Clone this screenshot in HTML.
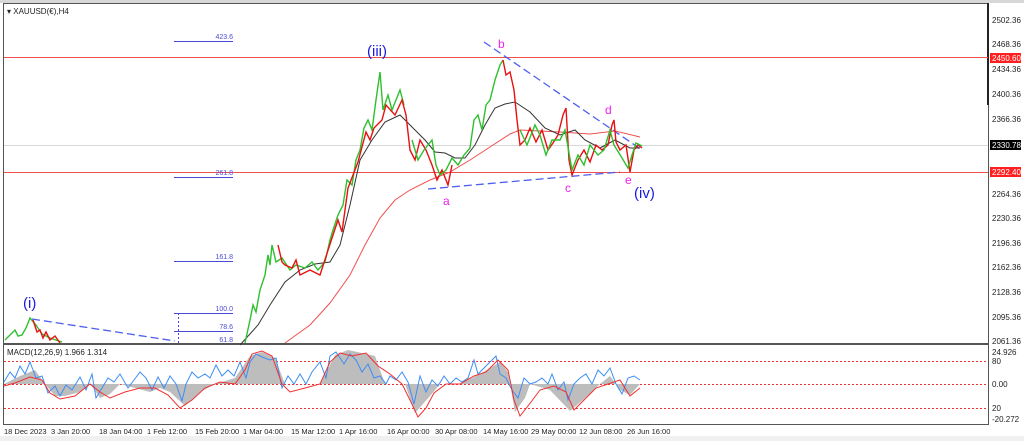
<!DOCTYPE html>
<html><head><meta charset="utf-8"><style>
html,body{margin:0;padding:0;background:#fff;}
svg{display:block;font-family:"Liberation Sans",sans-serif;}
</style></head><body>
<svg width="1024" height="441" viewBox="0 0 1024 441" xmlns="http://www.w3.org/2000/svg">
<rect width="1024" height="441" fill="#fff"/>
<rect x="0" y="0" width="1024" height="3" fill="#d8d8d8"/>
<rect x="0" y="436" width="1024" height="5" fill="#f0f0f0"/>
<rect x="3.5" y="3.5" width="985" height="340" fill="#fff" stroke="#555" stroke-width="1"/>
<rect x="3.5" y="344.5" width="985" height="80" fill="#fff" stroke="#555" stroke-width="1"/>
<line x1="988" y1="3" x2="988" y2="105" stroke="#222" stroke-width="2"/>
<text x="7" y="14" font-size="8" fill="#222">▾ XAUUSD(€),H4</text>
<line x1="4" y1="57.5" x2="988" y2="57.5" stroke="#f05050" stroke-width="1"/>
<line x1="4" y1="172.5" x2="988" y2="172.5" stroke="#f05050" stroke-width="1"/>
<line x1="4" y1="145.5" x2="988" y2="145.5" stroke="#d8d8d8" stroke-width="1"/>
<g stroke="#4a4ad8" stroke-width="1">
<line x1="174" y1="41.5" x2="233" y2="41.5"/>
<line x1="174" y1="177.5" x2="233" y2="177.5"/>
<line x1="174" y1="261.5" x2="233" y2="261.5"/>
<line x1="174" y1="313.5" x2="233" y2="313.5"/>
<line x1="174" y1="331.5" x2="233" y2="331.5"/>
<line x1="178.5" y1="313" x2="178.5" y2="343" stroke-dasharray="2,2"/>
</g>
<g font-size="7" fill="#4a4ad8" text-anchor="end">
<text x="233" y="39">423.6</text><text x="233" y="175">261.8</text><text x="233" y="259">161.8</text>
<text x="233" y="311">100.0</text><text x="233" y="329">78.6</text><text x="233" y="342">61.8</text>
</g>
<g stroke="#4d5ff0" stroke-width="1.3" stroke-dasharray="8,4" fill="none">
<line x1="32" y1="319" x2="175" y2="341"/>
<line x1="484" y1="42" x2="642" y2="150"/>
<line x1="428" y1="189" x2="620" y2="172"/>
</g>
<polyline fill="none" stroke="#f05050" stroke-width="1" points="285,343 310,325 330,303 350,275 365,245 380,218 395,200 410,190 430,180 450,172 470,160 490,147 510,134 520,130 560,132 590,134 615,131 640,137"/>
<polyline fill="none" stroke="#333" stroke-width="1" points="240,345 258,325 270,305 285,282 300,270 315,264 330,262 340,245 350,205 360,160 372,140 385,122 400,115 410,125 425,140 435,152 445,153 455,158 465,158 475,145 485,125 495,108 505,104 515,102 530,112 545,128 560,135 575,130 585,140 600,148 615,140 630,148 640,148"/>
<g fill="none" stroke-width="1.4">
<polyline stroke="#2ec02e" points="5,340 15,330 18,336 22,335 26,328 30,318 36,325 42,334 50,338 62,342"/>
<polyline stroke="#e81010" points="33,320 37,332 40,330 43,338 46,332 50,340 55,336 60,343"/>
<polyline stroke="#2ec02e" points="245,343 250,320 253,305 256,312 260,290 265,275 268,255 270,265 272,245 276,262 282,258 290,270 296,265 305,268 312,262 318,270 325,262 330,240 333,230 338,215 343,205 347,180 352,185 356,160 360,150 364,128 368,120 372,130 376,100 380,72 383,110 388,95 392,110 396,100 400,90 404,105"/>
<polyline stroke="#e81010" points="278,245 282,262 285,265 292,268 296,260 300,275 310,270 320,275 332,238 338,220 342,232 348,188 358,162 366,132 370,140 374,128 382,120 386,105 395,115 402,100 406,115 410,150 415,160 420,140 426,150 432,165 437,180 442,170 448,185 452,165"/>
<polyline stroke="#2ec02e" points="412,140 418,160 424,150 432,140 436,165 440,175 446,170 452,158 458,165 464,155 470,148 474,120 478,115 482,130 486,105 490,100 495,80 500,65 503,60"/>
<polyline stroke="#e81010" points="503,60 506,75 510,72 514,90 517,120 520,145 525,140 530,128 536,142 542,130 548,150 553,143 558,135 563,115 566,108 569,160 572,175 578,160 584,150 590,162 596,145 602,150 608,145 612,125 614,120 616,142 620,150 626,145 630,172 634,150 638,145 642,148"/>
<polyline stroke="#2ec02e" points="520,130 527,145 535,125 540,135 546,155 552,140 560,140 565,130 572,170 578,155 584,165 590,145 598,155 604,150 610,130 614,145 622,158 628,168 632,155 636,143 642,146"/>
</g>
<g font-size="15" fill="#1a1ae0">
<text x="367" y="56">(iii)</text>
<text x="23" y="308">(i)</text>
<text x="634" y="198">(iv)</text>
</g>
<g font-size="12" fill="#ee22ee">
<text x="498" y="48">b</text><text x="443" y="205">a</text><text x="565" y="192">c</text>
<text x="605" y="114">d</text><text x="625" y="184">e</text>
</g>
<g font-size="8" fill="#222">
<text x="992" y="23">2502.36</text><text x="992" y="47">2468.36</text><text x="992" y="72">2434.36</text>
<text x="992" y="97">2400.36</text><text x="992" y="122">2366.36</text><text x="992" y="197">2264.36</text>
<text x="992" y="221">2230.36</text><text x="992" y="246">2196.36</text><text x="992" y="270">2162.36</text>
<text x="992" y="295">2128.36</text><text x="992" y="320">2095.36</text><text x="992" y="344">2061.36</text>
<text x="992" y="355">24.926</text><text x="992" y="364">80</text><text x="992" y="387">0.00</text>
<text x="992" y="411">20</text><text x="992" y="422">-20.272</text>
</g>
<rect x="990" y="53" width="31" height="10" fill="#ff2020"/><text x="992" y="61" font-size="8" fill="#fff">2450.60</text>
<rect x="990" y="140" width="31" height="10" fill="#000"/><text x="992" y="148" font-size="8" fill="#fff">2330.78</text>
<rect x="990" y="167" width="31" height="10" fill="#ff2020"/><text x="992" y="175" font-size="8" fill="#fff">2292.40</text>
<text x="7" y="355" font-size="8" fill="#222">MACD(12,26,9) 1.966 1.314</text>
<g stroke="#f03030" stroke-width="1" stroke-dasharray="2,2">
<line x1="4" y1="361.5" x2="988" y2="361.5"/><line x1="4" y1="384.5" x2="988" y2="384.5"/><line x1="4" y1="408.5" x2="988" y2="408.5"/>
</g>
<polygon fill="#bdbdbd" points="4,384 20,376 35,370 45,384 55,396 65,396 80,392 90,384 100,398 110,394 120,384 135,388 150,392 160,388 170,392 185,406 200,392 215,384 235,378 250,356 262,352 275,358 285,384 300,384 320,384 335,355 348,350 362,353 375,356 385,384 405,384 415,413 430,396 440,384 460,384 480,374 500,362 508,372 515,412 525,398 530,384 550,390 570,411 585,398 600,384 610,376 620,390 630,395 640,384 640,384 4,384"/>
<polyline fill="none" stroke="#3d8ef5" stroke-width="1" points="4,382 10,372 15,378 20,366 25,374 30,362 36,378 42,376 48,393 55,386 60,396 66,385 72,390 80,377 86,390 92,374 96,398 102,388 108,378 114,382 120,374 128,388 134,380 140,372 146,378 152,390 158,377 164,388 170,376 176,384 182,401 186,384 192,372 198,378 205,374 210,378 216,365 222,376 228,370 234,376 240,362 246,378 250,362 256,354 262,357 270,360 276,358 282,388 288,376 294,384 300,374 306,384 312,372 320,362 326,378 330,356 336,352 344,364 350,354 356,360 362,372 368,364 374,378 380,376 386,384 390,376 396,380 402,372 408,382 414,404 420,376 426,392 432,380 438,386 444,376 450,384 456,378 462,382 468,378 474,360 478,374 484,368 490,362 496,356 500,374 506,378 512,390 518,398 524,378 530,384 536,382 542,378 548,384 552,374 558,390 564,382 568,400 574,384 580,378 586,374 592,384 598,370 604,376 610,368 616,384 622,394 628,378 634,376 640,380"/>
<polyline fill="none" stroke="#f03030" stroke-width="1" points="4,386 15,383 30,377 42,380 50,393 60,399 75,396 90,384 100,392 110,398 125,392 140,388 155,388 168,395 180,408 192,400 205,388 220,382 235,384 245,370 252,354 262,351 272,356 282,384 290,392 305,388 320,384 330,362 340,353 352,356 366,353 378,366 390,374 402,384 410,400 418,417 426,408 434,393 446,384 460,384 474,376 486,372 498,360 508,370 514,400 520,416 528,406 540,390 554,386 566,392 574,410 584,400 596,388 608,384 620,380 630,396 640,388"/>
<g font-size="7.5" fill="#222">
<text x="4" y="434">18 Dec 2023</text><text x="51" y="434">3 Jan 20:00</text><text x="99" y="434">18 Jan 04:00</text>
<text x="147" y="434">1 Feb 12:00</text><text x="195" y="434">15 Feb 20:00</text><text x="243" y="434">1 Mar 04:00</text>
<text x="291" y="434">15 Mar 12:00</text><text x="339" y="434">1 Apr 16:00</text><text x="387" y="434">16 Apr 00:00</text>
<text x="435" y="434">30 Apr 08:00</text><text x="483" y="434">14 May 16:00</text><text x="531" y="434">29 May 00:00</text>
<text x="579" y="434">12 Jun 08:00</text><text x="627" y="434">26 Jun 16:00</text>
</g>
</svg>
</body></html>
